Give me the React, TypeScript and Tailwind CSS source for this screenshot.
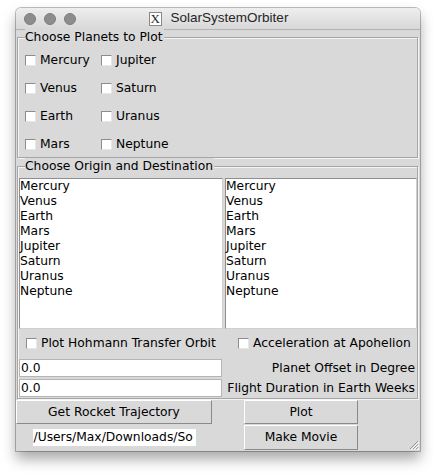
import React from 'react';

const planetsA = ['Mercury', 'Venus', 'Earth', 'Mars'];
const planetsB = ['Jupiter', 'Saturn', 'Uranus', 'Neptune'];
const allPlanets = [...planetsA, ...planetsB];

const Box: React.FC = () => (
  <span className="inline-block w-[11px] h-[11px] bg-white border border-t-[#8c8c8c] border-l-[#8c8c8c] border-r-[#e6e6e6] border-b-[#e6e6e6] shrink-0" />
);

const Check: React.FC<{ label: string; className?: string }> = ({ label, className }) => (
  <div className={`flex items-center gap-[4px] ${className || ''}`}>
    <Box />
    <span>{label}</span>
  </div>
);

// groove style frame with the title sitting on the top line
const LabelFrame: React.FC<{ title: string; className?: string; children: React.ReactNode }> = ({ title, className, children }) => (
  <div className={`relative border border-[#a6a6a6] shadow-[inset_1px_1px_0_#f4f4f4,1px_1px_0_#f4f4f4] ${className || ''}`}>
    <span className="absolute left-[7px] top-[-9px] leading-[16px] bg-[#d9d9d9] pr-[1px]">{title}</span>
    {children}
  </div>
);

const ListBox: React.FC<{ className?: string }> = ({ className }) => (
  <div className={`bg-white border border-[#8e8e8e] border-r-[#d0d0d0] border-b-[#d0d0d0] h-[151px] ${className || ''}`}>
    {allPlanets.map(p => (
      <div key={p} className="h-[15px] leading-[14px]">{p}</div>
    ))}
  </div>
);

const TkButton: React.FC<{ label: string; className?: string }> = ({ label, className }) => (
  <div className={`flex items-center justify-center bg-[#d9d9d9] border border-t-white border-l-white border-r-[#8a8a8a] border-b-[#8a8a8a] ${className || ''}`}>
    {label}
  </div>
);

const App: React.FC = () => {
  return (
    <div className="w-[436px] h-[474px] bg-white pt-[8px] pl-[16px]">
      <div className="w-[404px] h-[443px] flex flex-col rounded-t-[5px] shadow-[0_0_0_1px_rgba(0,0,0,0.25),0_8px_14px_rgba(0,0,0,0.35)] overflow-hidden">
        {/* title bar */}
        <div className="h-[22px] shrink-0 relative flex items-center justify-center bg-gradient-to-b from-[#eeeeee] to-[#d8d8d8] border-b border-[#b3b3b3] font-['Liberation_Sans',sans-serif] text-[13.5px] text-[#262626]">
          <div className="absolute left-[8px] top-[5px] flex gap-[8px]">
            <span className="w-[12px] h-[12px] rounded-full bg-[#8d8d8d] border border-[#7d7d7d]" />
            <span className="w-[12px] h-[12px] rounded-full bg-[#8d8d8d] border border-[#7d7d7d]" />
            <span className="w-[12px] h-[12px] rounded-full bg-[#8d8d8d] border border-[#7d7d7d]" />
          </div>
          <div className="flex items-center gap-[9px] ml-[1px]">
            <span className="w-[13px] h-[14px] bg-white border border-[#888] flex items-center justify-center font-['Liberation_Serif',serif] text-[13px] leading-none">X</span>
            <span>SolarSystemOrbiter</span>
          </div>
        </div>

        {/* body */}
        <div className="relative flex-1 bg-[#d9d9d9] font-['DejaVu_Sans',sans-serif] text-[12.3px] text-black">
          <LabelFrame title="Choose Planets to Plot" className="ml-[1px] mt-[7px] w-[401px] h-[121px]">
            <div className="pt-[8px] pl-[7px] flex">
              <div className="w-[76px]">
                {planetsA.map(p => (
                  <Check key={p} label={p} className="h-[28px]" />
                ))}
              </div>
              <div>
                {planetsB.map(p => (
                  <Check key={p} label={p} className="h-[28px]" />
                ))}
              </div>
            </div>
          </LabelFrame>

          <LabelFrame title="Choose Origin and Destination" className="ml-[1px] mt-[8px] w-[401px] h-[233px]">
            <div className="pt-[11px] pl-[1px]">
              <div className="flex gap-[2px]">
                <ListBox className="w-[204px]" />
                <ListBox className="w-[192px]" />
              </div>
              <div className="flex h-[29px] items-center pl-[7px]">
                <Check label="Plot Hohmann Transfer Orbit" className="w-[212px]" />
                <Check label="Acceleration at Apohelion" />
              </div>
              <div className="flex items-center mt-[1px] h-[18px]">
                <div className="w-[203px] h-[18px] bg-white border border-[#b5b5b5] leading-[16px] pl-[1px]">0.0</div>
                <span className="flex-1 text-right pr-[2px]">Planet Offset in Degree</span>
              </div>
              <div className="flex items-center mt-[2px] h-[18px]">
                <div className="w-[203px] h-[18px] bg-white border border-[#b5b5b5] leading-[16px] pl-[1px]">0.0</div>
                <span className="flex-1 text-right pr-[2px]">Flight Duration in Earth Weeks</span>
              </div>
            </div>
          </LabelFrame>

          <div className="mt-[1px] grid grid-cols-[196px_114px] gap-x-[32px] grid-rows-[24px_25px] gap-y-[1px]">
            <TkButton label="Get Rocket Trajectory" />
            <TkButton label="Plot" />
            <div className="flex items-center justify-center">
              <div className="w-[163px] h-[17px] bg-white leading-[17px] pl-[1px] overflow-hidden whitespace-nowrap">/Users/Max/Downloads/So</div>
            </div>
            <TkButton label="Make Movie" />
          </div>

          <svg className="absolute right-[1px] bottom-[1px]" width="12" height="12" viewBox="0 0 12 12">
            <path d="M11 3 L3 11 M11 6 L6 11 M11 9 L9 11" stroke="#9a9a9a" strokeWidth="1" />
            <path d="M12 4 L4 12 M12 7 L7 12 M12 10 L10 12" stroke="#ffffff" strokeWidth="1" />
          </svg>
        </div>
      </div>
    </div>
  );
};

export default App;
